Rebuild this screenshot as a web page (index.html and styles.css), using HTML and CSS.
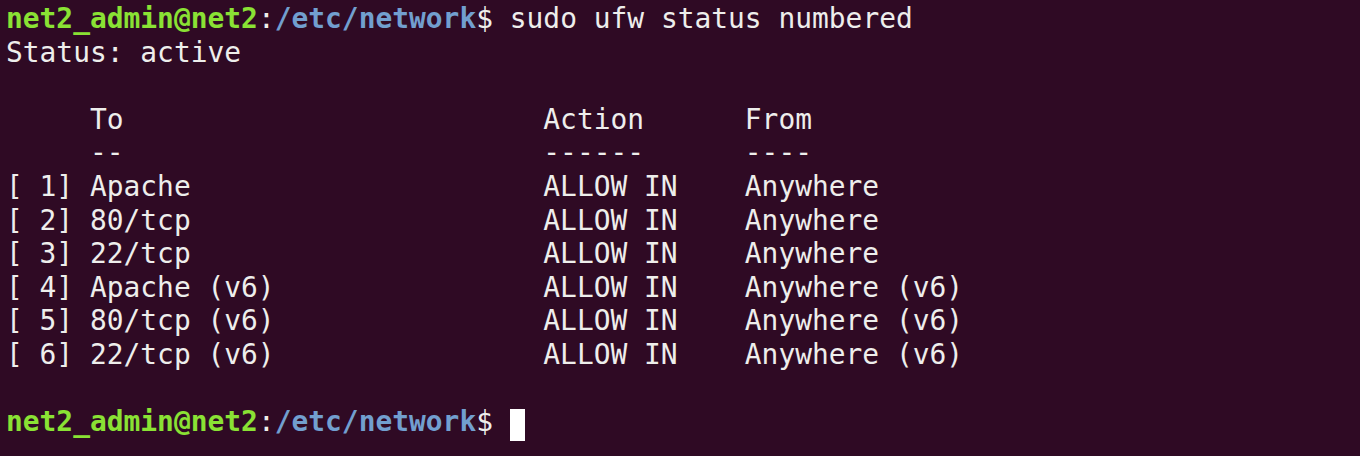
FILE: index.html
```html
<!DOCTYPE html>
<html>
<head>
<meta charset="utf-8">
<link rel="stylesheet" href="styles.css">
</head>
<body>
<div class="term">
<div class="line"><span class="user">net2_admin@net2</span><span class="colon">:</span><span class="path">/etc/network</span><span class="dollar">$</span> sudo ufw status numbered</div>
<div class="line">Status: active</div>
<div class="line"> </div>
<div class="line">     To                         Action      From</div>
<div class="line">     --                         ------      ----</div>
<div class="line">[ 1] Apache                     ALLOW IN    Anywhere</div>
<div class="line">[ 2] 80/tcp                     ALLOW IN    Anywhere</div>
<div class="line">[ 3] 22/tcp                     ALLOW IN    Anywhere</div>
<div class="line">[ 4] Apache (v6)                ALLOW IN    Anywhere (v6)</div>
<div class="line">[ 5] 80/tcp (v6)                ALLOW IN    Anywhere (v6)</div>
<div class="line">[ 6] 22/tcp (v6)                ALLOW IN    Anywhere (v6)</div>
<div class="line"> </div>
<div class="line"><span class="user">net2_admin@net2</span><span class="colon">:</span><span class="path">/etc/network</span><span class="dollar">$</span> <span class="cursor"> </span></div>
</div>
</body>
</html>
```
FILE: styles.css
```css
html, body {
  margin: 0;
  padding: 0;
  background: #2f0a24;
  height: 100%;
  overflow: hidden;
}
.term {
  padding: 2px 0 0 6px;
  border-left: 2px solid #4a2a3e;
  height: 456px;
  box-sizing: border-box;
  margin-left: -2px;
  font-family: "DejaVu Sans Mono", "Liberation Mono", monospace;
  font-size: 27.9px;
  line-height: 33.6px;
  color: #eeeeec;
  letter-spacing: 0;
}
.line {
  white-space: pre;
  height: 33.6px;
}
.user {
  color: #8ae234;
  font-weight: bold;
}
.colon {
  color: #eeeeec;
}
.path {
  color: #729fcf;
  font-weight: bold;
}
.dollar {
  color: #eeeeec;
}
.cursor {
  display: inline-block;
  width: 15px;
  height: 32px;
  background: #ffffff;
  vertical-align: -4px;
}
```
